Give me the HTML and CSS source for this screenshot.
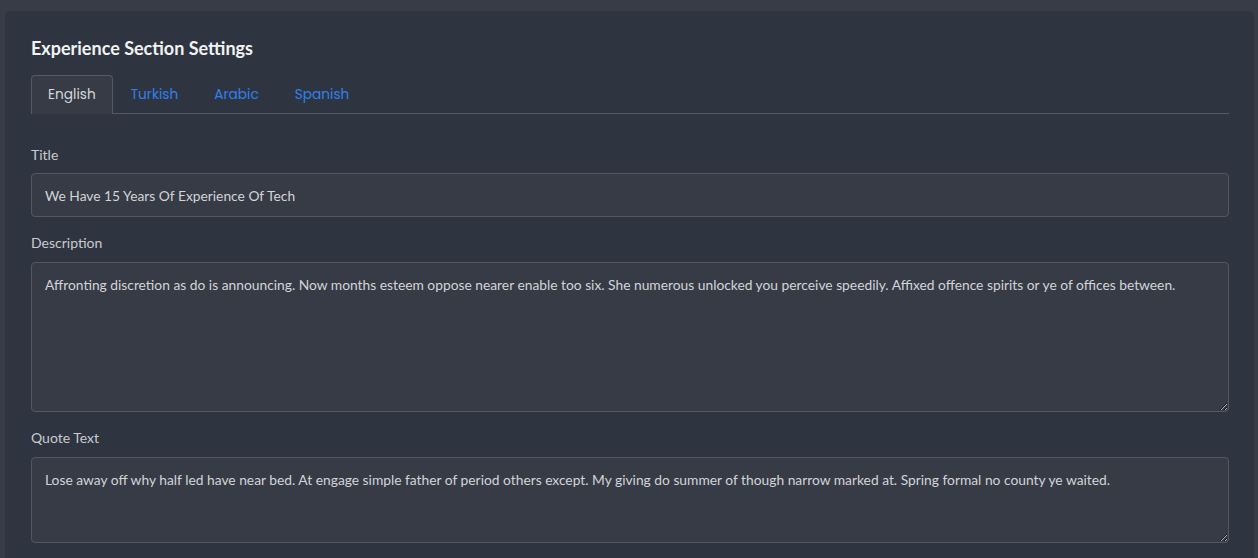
FILE: index.html
```html
<!DOCTYPE html>
<html>
<head>
<meta charset="utf-8">
<link rel="stylesheet" href="styles.css">
</head>
<body>
<div class="card">
  <h2 class="card-title">Experience Section Settings</h2>
  <ul class="tabs">
    <li class="tab active">English</li>
    <li class="tab">Turkish</li>
    <li class="tab">Arabic</li>
    <li class="tab">Spanish</li>
  </ul>
  <div class="field">
    <label class="label">Title</label>
    <input class="input" type="text" value="We Have 15 Years Of Experience Of Tech">
  </div>
  <div class="field field-area">
    <label class="label">Description</label>
    <textarea class="input area-lg">Affronting discretion as do is announcing. Now months esteem oppose nearer enable too six. She numerous unlocked you perceive speedily. Affixed offence spirits or ye of offices between.</textarea>
  </div>
  <div class="field field-area">
    <label class="label">Quote Text</label>
    <textarea class="input area-sm">Lose away off why half led have near bed. At engage simple father of period others except. My giving do summer of though narrow marked at. Spring formal no county ye waited.</textarea>
  </div>
</div>
</body>
</html>
```
FILE: styles.css
```css
html, body {
  margin: 0;
  padding: 0;
  background: #373c47;
  height: 100%;
  overflow: hidden;
}
body {
  padding: 11px 4px 0 5px;
  font-family: Lato, "Liberation Sans", sans-serif;
}
.card {
  background: #2f3540;
  border-radius: 5px 5px 0 0;
  padding: 26px 25px 20px 26px;
  min-height: 600px;
}
.card-title {
  margin: 0 0 16px 0;
  font-size: 18px;
  font-weight: 700;
  color: #f1f2f4;
  line-height: 22px;
}
.tabs {
  list-style: none;
  margin: 0 0 32px 0;
  padding: 0;
  display: flex;
  border-bottom: 1px solid #565a65;
}
.tab {
  font-family: Poppins, Inter, "Open Sans", sans-serif;
  font-size: 13.7px;
  color: #2f80ed;
  padding: 0 17px;
  height: 37px;
  line-height: 38px;
  border: 1px solid transparent;
  border-bottom: none;
  border-radius: 4px 4px 0 0;
  margin-bottom: -1px;
}
.tab.active {
  color: #d5d7db;
  background: #373b46;
  border-color: #565a65;
  padding: 0 16px;
  height: 38px;
}
.field {
  margin-bottom: 17px;
}
.label {
  display: block;
  font-size: 14px;
  color: #c9cbcf;
  margin-bottom: 9px;
  line-height: 18px;
}
.field-area .label {
  margin-bottom: 10px;
}
.input {
  display: block;
  box-sizing: border-box;
  width: 100%;
  background: #373b46;
  border: 1px solid #535762;
  border-radius: 4px;
  color: #d2d4d8;
  font-family: Lato, "Liberation Sans", sans-serif;
  font-size: 13.8px;
  padding: 0 13px;
  height: 44px;
  outline: none;
  margin: 0;
}
textarea.input {
  padding: 13px 13px;
  line-height: 18px;
  resize: vertical;
}
.area-lg {
  height: 150px;
}
.area-sm {
  height: 86px;
}
```
